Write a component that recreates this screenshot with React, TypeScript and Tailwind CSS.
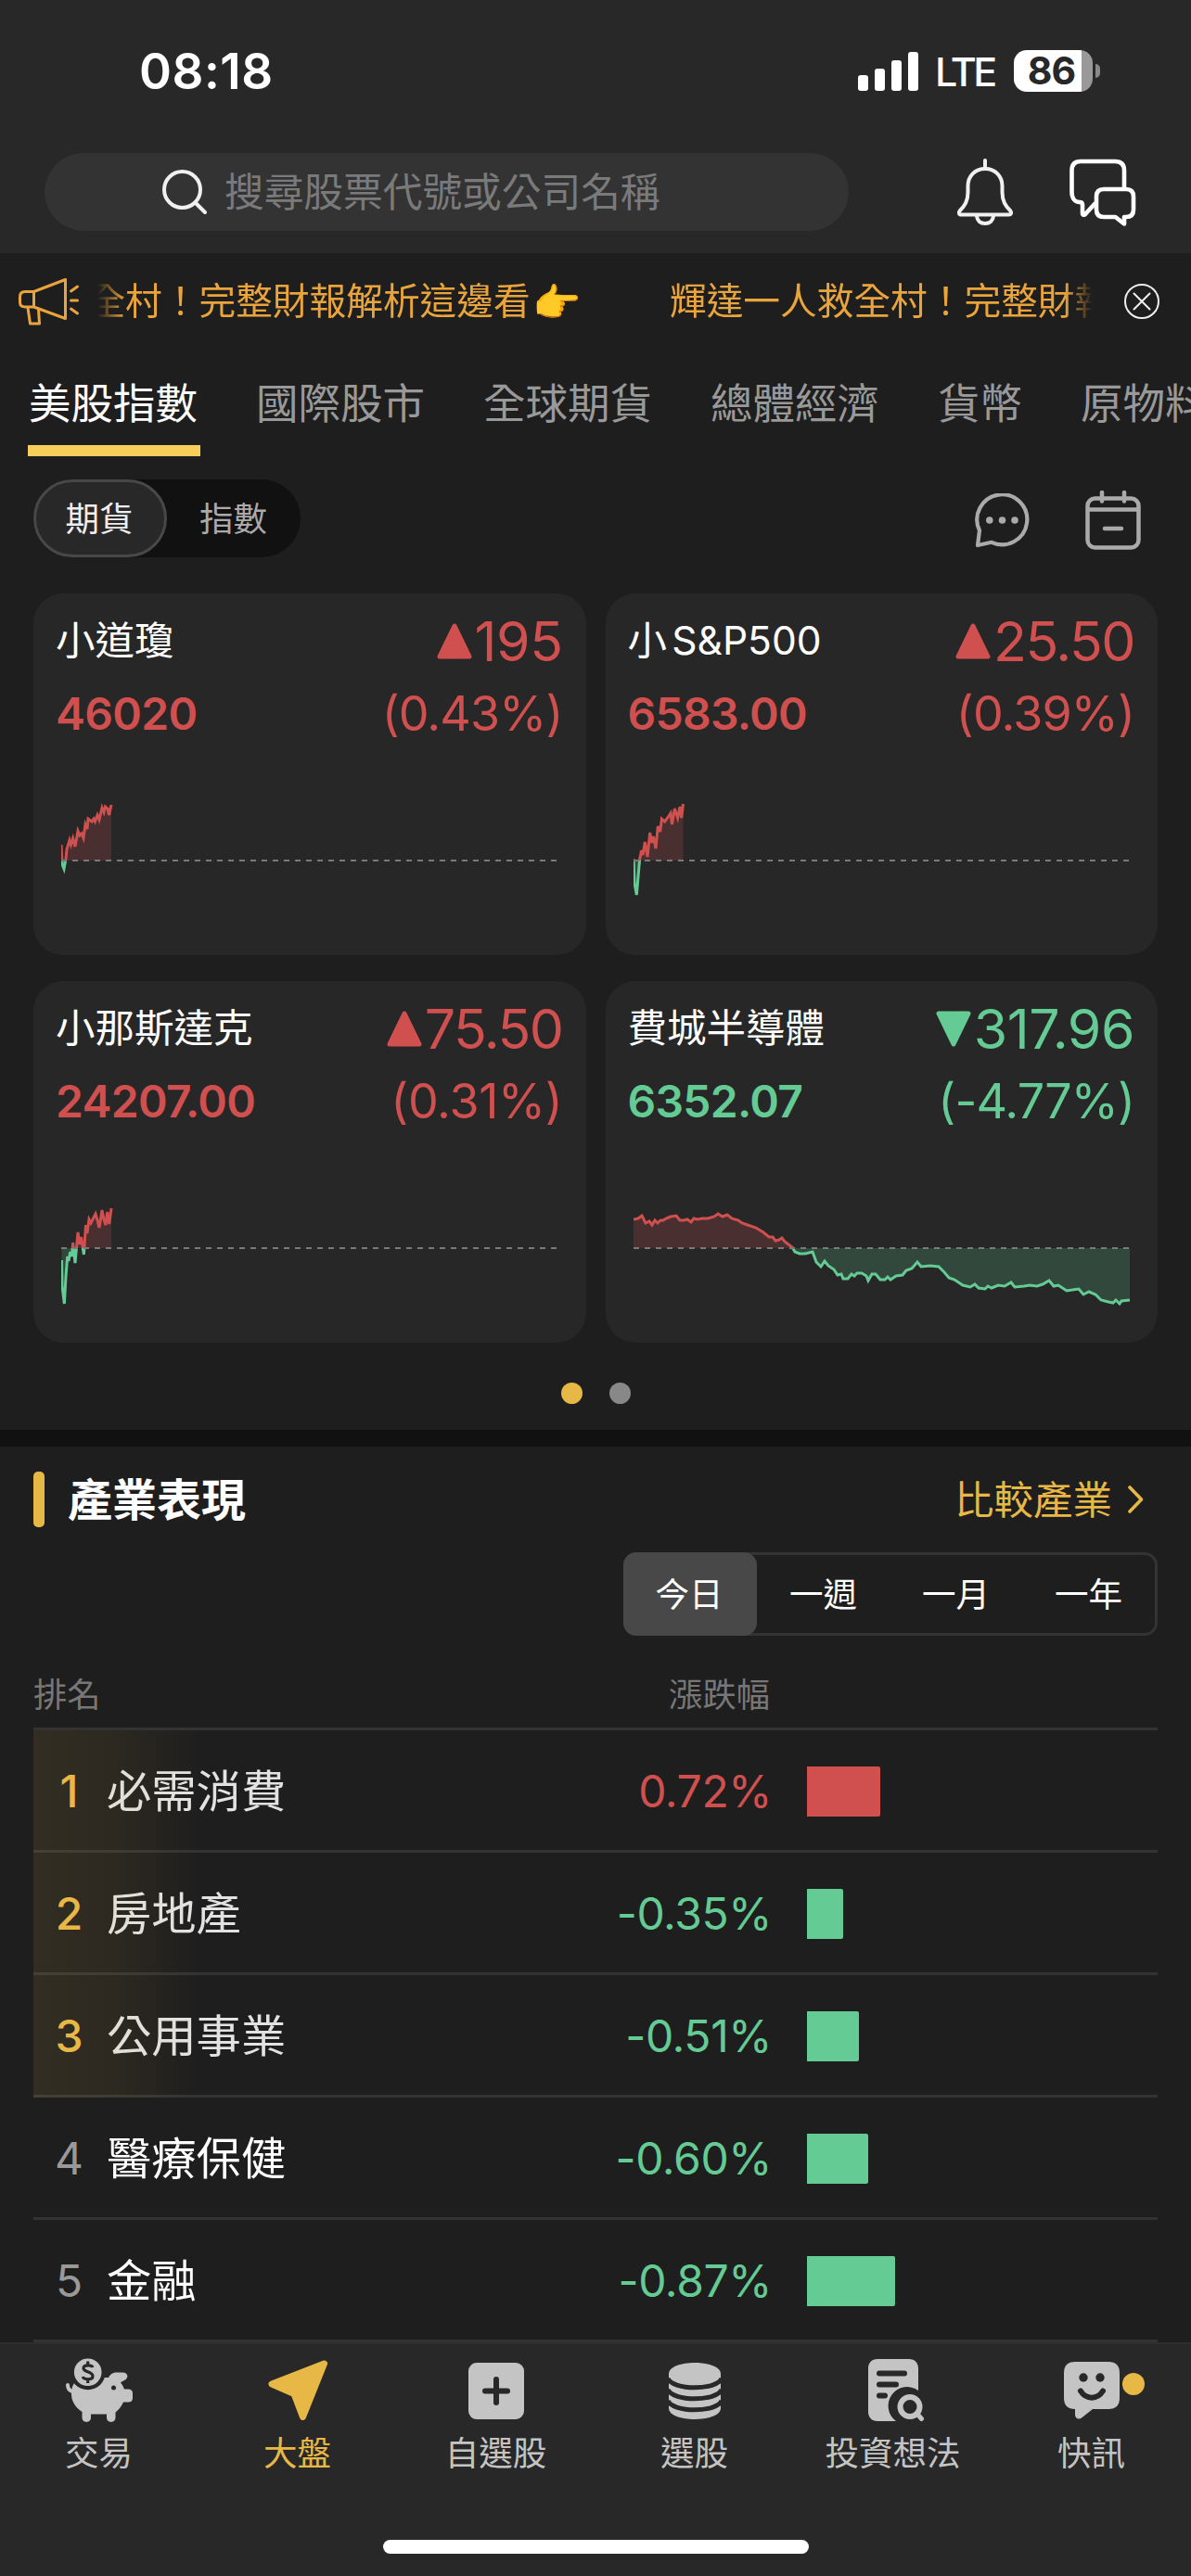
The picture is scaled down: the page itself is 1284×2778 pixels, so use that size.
import { clsx } from 'clsx';

const UP = '#d0504f';
const DOWN = '#63cb93';

type Point = [number, number];

interface Quote {
  id: string;
  name: string;
  price: string;
  change: string;
  percent: string;
  down?: boolean;
  // [minutes since open, distance from the previous close]
  series: Point[];
}

interface Sector {
  rank: number;
  name: string;
  percent: string;
  bar: number;
}

const QUOTES: Quote[] = [
  {
    id: 'ym',
    name: '小道瓊',
    price: '46020',
    change: '195',
    percent: '(0.43%)',
    series: [
      [0, 17], [1, -4], [3, -9], [5, 2], [6, 12], [9, 22], [10.5, 17], [12.6, 24], [15, 15], [18, 32], [20, 27],
      [22, 29], [24, 24], [26, 39], [28, 34], [29, 45], [33, 42], [35, 45], [36.5, 42], [39, 49], [41, 44],
      [44, 57], [46, 52], [47.5, 58], [50, 56], [51.5, 49], [54, 60],
    ],
  },
  {
    id: 'es',
    name: '小S&P500',
    price: '6583.00',
    change: '25.50',
    percent: '(0.39%)',
    series: [
      [0, 2], [1, -24], [3.3, -37], [5.3, -14], [6.6, 1], [8.6, 11], [10, 6], [12.3, 20], [15, 4], [17.7, 30],
      [19.7, 19], [21.4, 26], [24, 13], [26.3, 37], [28.7, 31], [30.4, 45], [33.7, 42], [37.4, 47], [40, 51],
      [41.5, 39], [44.4, 56], [47.6, 46], [50, 58], [51.7, 46], [53.5, 61],
    ],
  },
  {
    id: 'nq',
    name: '小那斯達克',
    price: '24207.00',
    change: '75.50',
    percent: '(0.31%)',
    series: [
      [0.5, -13], [1, -41], [3.4, -60], [5, -31], [6.7, -9], [8, -14], [9.7, -4], [11.4, -9], [12.6, 6], [15, -16],
      [18, 17], [19.8, 4], [21.5, 12], [24.4, -7], [26.5, 25], [28, 16], [30, 31], [32, 27], [34.5, 32], [37, 37],
      [39, 30], [41, 22], [44, 41], [46, 31], [48, 25], [49.7, 39], [51.8, 26], [54, 43],
    ],
  },
  {
    id: 'sox',
    name: '費城半導體',
    price: '6352.07',
    change: '317.96',
    percent: '(-4.77%)',
    down: true,
    series: [
      [0, 31], [5, 32], [9, 35], [13, 27], [17, 29], [20, 25], [23, 30], [26, 27], [29, 30], [32, 30], [35, 32],
      [40, 34], [46, 35], [50, 30], [54, 30], [58, 31], [62, 28], [65, 32], [69, 31], [74, 32], [80, 32], [87, 34],
      [91, 37], [96, 34], [101, 36], [106, 32], [113, 30], [117, 27], [123, 25], [132, 22], [140, 17], [146, 12],
      [150, 12], [153, 8], [157, 9], [160, 11], [163, 7], [167, 4], [171, 1], [174, -4], [179, -6], [185, -6],
      [193, -4], [197, -15], [202, -20], [206, -14], [210, -19], [216, -23], [220, -29], [224, -28], [226, -33],
      [231, -33], [235, -28], [238, -30], [241, -27], [246, -27], [251, -30], [253, -35], [257, -28], [261, -28],
      [266, -34], [271, -34], [274, -31], [277, -34], [283, -30], [290, -29], [294, -24], [300, -22], [306, -15],
      [310, -20], [320, -19], [329, -20], [335, -26], [340, -32], [346, -34], [355, -40], [363, -42], [368, -39],
      [372, -43], [379, -44], [382, -41], [386, -43], [393, -40], [400, -41], [407, -37], [411, -42], [421, -41],
      [427, -40], [435, -41], [441, -39], [448, -35], [453, -41], [458, -40], [467, -46], [473, -45], [480, -44],
      [485, -50], [491, -47], [498, -50], [504, -56], [512, -58], [517, -59], [520, -56], [524, -60], [526, -57],
      [535, -56],
    ],
  },
];

const SECTORS: Sector[] = [
  { rank: 1, name: '必需消費', percent: '0.72%', bar: 78.5 },
  { rank: 2, name: '房地產', percent: '-0.35%', bar: 38.5 },
  { rank: 3, name: '公用事業', percent: '-0.51%', bar: 56 },
  { rank: 4, name: '醫療保健', percent: '-0.60%', bar: 65.5 },
  { rank: 5, name: '金融', percent: '-0.87%', bar: 95 },
];

const TABS = ['美股指數', '國際股市', '全球期貨', '總體經濟', '貨幣', '原物料'];
const PERIODS = ['今日', '一週', '一月', '一年'];
const HEADLINE = '輝達一人救全村！完整財報解析這邊看';

function SignalAndBattery() {
  return (
    <div className="flex items-center">
      <svg width="65" height="42" viewBox="0 0 65 42" fill="#fff">
        <rect x="0" y="25" width="11" height="17" rx="3" />
        <rect x="18" y="18" width="11" height="24" rx="3" />
        <rect x="36" y="9" width="11" height="33" rx="3" />
        <rect x="54" y="0" width="11" height="42" rx="3" />
      </svg>
      <span className="ml-[18px] mt-[2px] w-[65px] text-[43px] leading-none tracking-[-3.500px] font-medium text-white">LTE</span>
      <div className="ml-[20px] flex h-[45px] w-[85px] items-center justify-center rounded-[14px] bg-[linear-gradient(90deg,#fff_86%,#999_86%)] pr-[4px] text-[41px] font-bold leading-none tracking-[-1px] text-[#282828]">
        86
      </div>
      <div className="ml-[3px] h-[15px] w-[5px] rounded-r-full bg-[#888]" />
    </div>
  );
}

function BellIcon() {
  return (
    <svg width="60" height="72" viewBox="0 0 60 72" fill="none" stroke="#f0f0f0" strokeWidth="4" strokeLinecap="round" strokeLinejoin="round">
      <path d="M30 2v9" />
      <path d="M30 11C19 11 11.5 19 11.5 29.5V36C11.5 46 8 51 3 56C1 58.5 2 60.5 4.5 60.5H55.5C58 60.5 59 58.5 57 56C52 51 48.5 46 48.5 36V29.5C48.5 19 41 11 30 11Z" />
      <path d="M21 62C21.5 67 25 70 30 70S38.5 67 39 62" />
    </svg>
  );
}

function ChatsIcon() {
  return (
    <svg width="72" height="73" viewBox="0 0 72 73" fill="none" stroke="#fff" strokeWidth="4.6" strokeLinecap="round" strokeLinejoin="round">
      <path d="M59 31V13C59 6.500 55.500 3 49 3H12C5.500 3 2.500 6.500 2.500 13V36C2.500 43 6 47 11 47C13 47 14 48 14 50V59C14 61 16 61 17 60L27 49" />
      <path d="M37 33H61C66.500 33 69 35.500 69 41V55C69 60.500 66.500 63 61 63H59V70.500L49.500 63H37C31.500 63 29 60.500 29 55V41C29 35.500 31.500 33 37 33Z" />
    </svg>
  );
}

function MegaphoneIcon() {
  return (
    <svg width="66" height="51" viewBox="0 0 66 51" fill="none" stroke="#eaa43c" strokeWidth="3" strokeLinecap="round" strokeLinejoin="round">
      <path d="M16.500 14.500H7C3.500 14.500 1.500 16.500 1.500 20V26C1.500 29.500 3.500 31 7 31H16.500ZM16.500 14.500L50.500 1.500V43.500L16.500 31" />
      <path d="M10 32L12.500 49H22.500L21.500 33.500" />
      <path d="M56.500 14L63.500 9M56.500 24H63.500M56.500 33L63.500 38" />
    </svg>
  );
}

function CloseIcon() {
  return (
    <svg width="38" height="38" viewBox="0 0 38 38" fill="none" stroke="#eee" strokeWidth="2" strokeLinecap="round">
      <circle cx="19" cy="19" r="18" />
      <path d="M10.500 10.500L27.500 27.500M27.500 10.500L10.500 27.500" />
    </svg>
  );
}

function CommentIcon() {
  return (
    <svg width="60" height="60" viewBox="0 0 60 60" fill="none" stroke="#aaa" strokeWidth="4.2" strokeLinejoin="round">
      <path d="M5 40A27 27 0 1 1 18 52.800L3 56Z" />
      <g fill="#aaa" stroke="none">
        <circle cx="15.800" cy="29" r="3.800" />
        <circle cx="29.500" cy="29" r="3.800" />
        <circle cx="43" cy="29" r="3.800" />
      </g>
    </svg>
  );
}

function CalendarIcon() {
  return (
    <svg width="60" height="65" viewBox="0 0 60 65" fill="none" stroke="#aaa" strokeWidth="4.500" strokeLinecap="round">
      <rect x="2.500" y="8.500" width="55" height="53" rx="8" />
      <path d="M3 20.500H57M18 2V11.500M42 2V11.500M21 41H39" />
    </svg>
  );
}

function PigIcon() {
  return (
    <svg width="73" height="70" viewBox="0 0 73 70" fill="#c4c4c4">
      <path d="M36 21H46C48 17 51 15.500 55 15.500H61C67 15.500 68 21 64 23.500C61 25 60 25.500 59 26.500C61 29 62 31 63 33.500H67C70.500 33.500 72 35 72 38V43C72 46 70.500 47.500 67 47.500H62C60 52 57 56 53.500 58.500V64C53.500 70.500 44 70.500 44 64V60.500H27V64C27 70.500 17.500 70.500 17.500 64V58C10 53 6 46 6 39C6 33 7 30 9 27Z" />
      <path d="M2 29C2 33 4 35 7 36" fill="none" stroke="#c4c4c4" strokeWidth="4" strokeLinecap="round" />
      <circle cx="51.500" cy="32" r="2.500" fill="#282828" />
      <circle cx="23.700" cy="15.300" r="19" fill="#282828" />
      <circle cx="23.700" cy="15.300" r="14.800" />
      <path d="M29 10C28 7.500 19 6.500 19 11C19 15.500 29 14 29 19.500C29 24 19 23.500 18.300 20M23.700 3.500V7M23.700 23.500V27" fill="none" stroke="#282828" strokeWidth="3.200" />
    </svg>
  );
}

function ArrowIcon() {
  return (
    <svg width="65" height="66" viewBox="0 0 65 66" fill="#e8b846" stroke="#e8b846" strokeWidth="7" strokeLinejoin="round">
      <path d="M60.500 4L4 26L28 36.500L37.500 61.500Z" />
    </svg>
  );
}

function PlusIcon() {
  return (
    <svg width="60" height="61" viewBox="0 0 60 61">
      <rect width="60" height="61" rx="9" fill="#c4c4c4" />
      <path d="M30 18V43M18 30.500H42" stroke="#282828" strokeWidth="6" strokeLinecap="round" />
    </svg>
  );
}

function StackIcon() {
  return (
    <svg width="56" height="61" viewBox="0 0 56 61">
      <path d="M0 12C0 -4 56 -4 56 12V49C56 65 0 65 0 49Z" fill="#c4c4c4" />
      <path d="M-1 17C4 30 52 30 57 17M-1 29C4 42 52 42 57 29M-1 41C4 54 52 54 57 41" fill="none" stroke="#282828" strokeWidth="5" />
    </svg>
  );
}

function IdeaIcon() {
  return (
    <svg width="60" height="68" viewBox="0 0 60 68" fill="none" strokeLinecap="round" className="ml-[6px]">
      <path d="M10 0H44C50 0 54 4 54 10V34A19 19 0 0 0 30 67H10C4 67 0 63 0 57V10C0 4 4 0 10 0Z" fill="#c4c4c4" />
      <path d="M12 15.500H39M12 27.500H30M12 39.500H18" stroke="#282828" strokeWidth="6" />
      <circle cx="45" cy="51.500" r="10.500" stroke="#c4c4c4" strokeWidth="6" />
      <path d="M53.500 60L57.500 64.500" stroke="#c4c4c4" strokeWidth="5" />
    </svg>
  );
}

function NewsIcon() {
  return (
    <svg width="60" height="62" viewBox="0 0 60 62">
      <path d="M12 0H48C56 0 60 4 60 12V39C60 47 56 51 48 51H31L19 60.500C16 63 12 61 12 57V51C4 51 0 47 0 39V12C0 4 4 0 12 0Z" fill="#c4c4c4" />
      <circle cx="21" cy="17" r="4.700" fill="#282828" />
      <circle cx="39" cy="17" r="4.700" fill="#282828" />
      <path d="M18 31.500C24 41 36 41 42 31.500" fill="none" stroke="#282828" strokeWidth="6" strokeLinecap="round" />
    </svg>
  );
}

function Sparkline({ id, series }: { id: string; series: Point[] }) {
  const base = 66;
  const line = series.map(([x, y]) => `${x},${base - y}`).join(' ');
  const area = `${series[0][0]},${base} ${line} ${series[series.length - 1][0]},${base}`;

  return (
    <svg width="536" height="132" viewBox="0 0 536 132" fill="none">
      <clipPath id={`${id}-above`}>
        <rect width="536" height={base} />
      </clipPath>
      <clipPath id={`${id}-below`}>
        <rect y={base} width="536" height={base} />
      </clipPath>
      <g clipPath={`url(#${id}-above)`}>
        <polygon points={area} fill={UP} fillOpacity="0.2" />
        <polyline points={line} stroke={UP} strokeWidth="3" />
      </g>
      <g clipPath={`url(#${id}-below)`}>
        <polygon points={area} fill={DOWN} fillOpacity="0.2" />
        <polyline points={line} stroke={DOWN} strokeWidth="3" />
      </g>
      <path d={`M0 ${base}H536`} stroke="#7a7a7a" strokeWidth="2" strokeDasharray="6 6" />
    </svg>
  );
}

function QuoteCard({ quote }: { quote: Quote }) {
  return (
    <div
      className={clsx(
        'flex h-[390px] flex-col rounded-[32px] bg-[#272727] pl-[24px] pr-[25px]',
        quote.down ? 'text-[#63cb93]' : 'text-[#d0504f]',
      )}
    >
      <div className="mt-[15px] flex h-[72px] items-center justify-between">
        <span className="text-[42.500px] leading-none text-white [text-autospace:normal]">{quote.name}</span>
        <span
          className={clsx(
            'flex items-center text-[59px] leading-none',
            quote.change.includes('1') ? 'tracking-[-0.500px]' : 'tracking-[-1.500px]',
          )}
        >
          <svg width="38" height="39" viewBox="0 0 38 39" className={clsx('mr-[3px]', quote.down && 'rotate-180')}>
            <path d="M19 3L35 36H3Z" fill="currentColor" stroke="currentColor" strokeWidth="5" strokeLinejoin="round" />
          </svg>
          {quote.change}
        </span>
      </div>
      <div className="mt-[7px] flex h-[72px] items-center justify-between">
        <span className="text-[48px] font-semibold leading-none tracking-[-0.700px]">{quote.price}</span>
        <span
          className={clsx(
            'text-[52px] leading-none',
            quote.percent.includes('1') ? 'tracking-[-0.300px]' : 'tracking-[-0.900px]',
          )}
        >
          {quote.percent}
        </span>
      </div>
      <div className="mt-[56px] pl-[6px]">
        <Sparkline id={quote.id} series={quote.series} />
      </div>
    </div>
  );
}

function SectorRow({ sector }: { sector: Sector }) {
  const top = sector.rank <= 3;
  const down = sector.percent.startsWith('-');

  return (
    <div className="relative flex h-[132px] items-center border-b-3 border-[#333] pt-[3px]">
      <span className={clsx('mr-[2px] w-[77px] text-center text-[48px] leading-none', top ? 'font-medium text-[#e8b846]' : 'text-[#999]')}>
        {sector.rank}
      </span>
      <span className={clsx('text-[48.300px] leading-none', top ? 'text-[#e2e2e2]' : 'text-white')}>{sector.name}</span>
      <div className="ml-auto flex w-[600px] items-center gap-[38px]">
        <span className={clsx('w-[184px] text-right text-[48px] leading-none tracking-[-0.400px]', down ? 'text-[#63cb93]' : 'text-[#d0504f]')}>
          {sector.percent}
        </span>
        <div
          className={clsx('h-[54px] rounded-r-[2px]', down ? 'bg-[#63cb93]' : 'bg-[#d0504f]')}
          style={{ width: sector.bar }}
        />
      </div>
      {/* Highlight for the podium rows */}
      {top && (
        <div className="absolute -bottom-[3px] left-0 top-0 w-[180px] bg-linear-to-r from-[#e8b846]/10 via-[#e8b846]/7 to-transparent" />
      )}
    </div>
  );
}

const NAV = [
  { label: '交易', icon: <PigIcon /> },
  { label: '大盤', icon: <ArrowIcon />, active: true },
  { label: '自選股', icon: <PlusIcon /> },
  { label: '選股', icon: <StackIcon /> },
  { label: '投資想法', icon: <IdeaIcon /> },
  { label: '快訊', icon: <NewsIcon />, badge: true },
];

export default function App() {
  return (
    <div className="flex h-[2778px] w-[1284px] flex-col overflow-hidden bg-[#1e1e1e] font-['Inter','Noto_Sans_CJK_TC',sans-serif] text-white">
      <header className="h-[273px] shrink-0 bg-[#282828]">
        <div className="flex h-[165px] items-center justify-between pb-[12px] pl-[150px] pr-[98px]">
          <span className="mt-[1px] text-[53px] font-semibold leading-none tracking-[0.500px]">08:18</span>
          <SignalAndBattery />
        </div>
        <div className="flex items-center pl-[48px] pr-[59px]">
          <div className="flex h-[84px] w-[867px] items-center rounded-full bg-[#333] pl-[127px]">
            <svg width="48" height="48" viewBox="0 0 48 48" fill="none" stroke="#f0f0f0" strokeWidth="4" strokeLinecap="round">
              <circle cx="21.500" cy="21.500" r="19.500" />
              <path d="M36 36L46 46" />
            </svg>
            <span className="ml-[19px] mt-[2px] text-[42.700px] leading-none text-[#7a7a7a]">搜尋股票代號或公司名稱</span>
          </div>
          <div className="ml-auto flex items-center gap-[61px]">
            <BellIcon />
            <ChatsIcon />
          </div>
        </div>
      </header>

      <div className="flex h-[104px] shrink-0 items-center pl-[20px] pr-[34px]">
        <MegaphoneIcon />
        <div className="ml-[19px] w-[1073px] overflow-hidden mask-[linear-gradient(90deg,transparent,#000_30px,#000_1043px,transparent)]">
          <div className="-ml-[208px] flex h-[60px] w-max items-center pt-[2px] text-[39.700px] leading-none text-[#eaa43c]">
            <div className="flex w-[825px] items-center whitespace-nowrap">
              <span>{HEADLINE}</span>
              <span className="ml-[2px] text-[42px]">👉</span>
            </div>
            <span className="whitespace-nowrap">{HEADLINE}</span>
          </div>
        </div>
        <div className="ml-auto">
          <CloseIcon />
        </div>
      </div>

      <nav className="flex h-[115px] w-[1400px] shrink-0 gap-[59px] pl-[30px]">
        {TABS.map((tab, i) => (
          <div
            key={tab}
            className={clsx(
              'flex h-full shrink-0 items-center justify-center border-b-12 pl-[1px] pr-[3px] pt-[14px] text-[45.500px] leading-none',
              i === 0 ? 'border-[#f8ce5b] text-white' : 'border-transparent text-[#999]',
            )}
          >
            {tab}
          </div>
        ))}
      </nav>

      <div className="mt-[25px] flex h-[84px] shrink-0 items-center justify-between pl-[36px] pr-[54px]">
        <div className="flex h-[84px] w-[288px] rounded-full bg-[#111] text-[36.500px] leading-none">
          <div className="flex w-[144px] items-center justify-center rounded-full border-3 border-[#484848] bg-[#282828] pr-[2px] pt-[2px] text-[#eee]">
            期貨
          </div>
          <div className="flex w-[144px] items-center justify-center pr-[1px] pt-[2px] text-[#aaa]">指數</div>
        </div>
        <div className="flex items-center gap-[59px] pt-[5px]">
          <CommentIcon />
          <CalendarIcon />
        </div>
      </div>

      <div className="mt-[39px] grid shrink-0 grid-cols-2 gap-x-[21px] gap-y-[28px] px-[36px]">
        {QUOTES.map((quote) => (
          <QuoteCard key={quote.id} quote={quote} />
        ))}
      </div>

      <div className="mt-[43px] flex shrink-0 justify-center gap-[29px]">
        <div className="size-[23px] rounded-full bg-[#e8b846]" />
        <div className="size-[23px] rounded-full bg-[#888]" />
      </div>

      <div className="mt-[28px] h-[18px] shrink-0 bg-[#111]" />

      <section className="flex flex-1 flex-col px-[36px]">
        <div className="mt-[27px] flex h-[60px] items-center">
          <div className="h-[60px] w-[12px] rounded-[5px] bg-[#e8b846]" />
          <h2 className="ml-[25px] mt-[2px] text-[48px] font-bold leading-none">產業表現</h2>
          <div className="ml-auto flex items-center gap-[17px] pr-[15px] text-[#e8b846]">
            <span className="mt-[2px] text-[42.500px] leading-none">比較產業</span>
            <svg width="17" height="30" viewBox="0 0 17 30" fill="none" stroke="currentColor" strokeWidth="3.600" strokeLinecap="round" strokeLinejoin="round">
              <path d="M2 2L14.500 15L2 28" />
            </svg>
          </div>
        </div>

        <div className="mt-[27px] flex h-[90px] w-[576px] self-end rounded-[14px] border-3 border-[#333] text-[36.500px] leading-none">
          {PERIODS.map((period, i) => (
            <div
              key={period}
              className={clsx(
                'flex items-center justify-center pt-[2px]',
                i === 0 ? '-my-[3px] -ml-[3px] w-[144px] rounded-[14px] bg-[#484848] pr-[2px]' : 'flex-1',
              )}
            >
              {period}
            </div>
          ))}
        </div>

        <div className="flex h-[102px] items-center border-b-3 border-[#333] pt-[30px] text-[36.300px] leading-none text-[#777]">
          <span>排名</span>
          <span className="ml-auto mr-[418px]">漲跌幅</span>
        </div>
        {SECTORS.map((sector) => (
          <SectorRow key={sector.rank} sector={sector} />
        ))}
      </section>

      <footer className="flex h-[252px] shrink-0 flex-col items-center border-t-2 border-[#2e2e2e] bg-[#282828]">
        <div className="flex w-full">
          {NAV.map((item) => (
            <div
              key={item.label}
              className={clsx('flex flex-1 flex-col items-center', item.active ? 'text-[#e8b846]' : 'text-[#c4c4c4]')}
            >
              <div className="relative mt-[14px] flex h-[72px] items-center">
                {item.icon}
                {item.badge && <div className="absolute -right-[27px] top-[17px] size-[24px] rounded-full bg-[#e8b846]" />}
              </div>
              <span className="mt-[14px] pr-[1px] text-[36.500px] leading-none">{item.label}</span>
            </div>
          ))}
        </div>
        <div className="mb-[24px] mt-auto h-[15px] w-[459px] rounded-full bg-white" />
      </footer>
    </div>
  );
}
